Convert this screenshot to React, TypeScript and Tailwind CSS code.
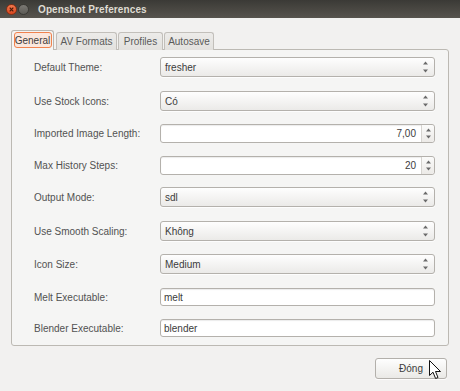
import React from "react";

const Arrows = () => (
  <svg width="7" height="12" viewBox="0 0 7 12" className="shrink-0">
    <path d="M3.5 0.5 L6 3.5 L1 3.5 Z" fill="#6a6a6a" />
    <path d="M3.5 11.5 L6 8.5 L1 8.5 Z" fill="#6a6a6a" />
  </svg>
);

const Combo = ({ value }: { value: string }) => (
  <div className="h-[20px] w-[275px] flex items-center justify-between pl-[4px] pr-[5px] rounded-[3px] border border-[#b4b1ac] bg-gradient-to-b from-[#fefefe] to-[#ebeae8] shadow-[0_1px_0_rgba(255,255,255,0.8)] text-[#3c3c3c]">
    <span>{value}</span>
    <Arrows />
  </div>
);

const Spin = ({ value }: { value: string }) => (
  <div className="h-[19px] w-[275px] flex rounded-[3px] border border-[#b4b1ac] bg-white shadow-[inset_0_1px_1px_rgba(0,0,0,0.08)] text-[#3c3c3c]">
    <div className="flex-1 flex items-center justify-end pr-[5px]">{value}</div>
    <div className="w-[13px] border-l border-[#d6d4d0] bg-gradient-to-b from-[#fbfbfa] to-[#eceae7] rounded-r-[3px] flex items-center justify-center">
      <svg width="7" height="11" viewBox="0 0 7 11">
        <path d="M3.5 0.5 L6 3.5 L1 3.5 Z" fill="#6a6a6a" />
        <path d="M3.5 10.5 L6 7.5 L1 7.5 Z" fill="#6a6a6a" />
      </svg>
    </div>
  </div>
);

const Entry = ({ value }: { value: string }) => (
  <div className="h-[18px] w-[275px] flex items-center pl-[3px] rounded-[3px] border border-[#b4b1ac] bg-white shadow-[inset_0_1px_1px_rgba(0,0,0,0.08)] text-[#3c3c3c]">
    {value}
  </div>
);

const FRow = ({ label, mt, children }: { label: string; mt: string; children: React.ReactNode }) => (
  <div className={`flex items-center ${mt}`}>
    <div className="w-[126px] shrink-0 text-[#525252]">{label}</div>
    {children}
  </div>
);

export default function App() {
  return (
    <div className="relative w-[460px] h-[391px] overflow-hidden bg-[#f2f1f0] font-['Liberation_Sans',Arial,sans-serif] text-[10px]">
      {/* title bar */}
      <div className="h-[18px] flex items-center bg-gradient-to-b from-[#3b3a36] to-[#57544e]">
        <div className="ml-[6px] w-[11px] h-[11px] rounded-full bg-gradient-to-b from-[#f47a4e] to-[#d9451c] border border-[#8a2f13] flex items-center justify-center">
          <svg width="5" height="5" viewBox="0 0 5 5">
            <path d="M0.7 0.7 L4.3 4.3 M4.3 0.7 L0.7 4.3" stroke="#4a1a0a" strokeWidth="1.2" />
          </svg>
        </div>
        <div className="ml-[1px] w-[11px] h-[11px] rounded-full bg-gradient-to-b from-[#7b7974] to-[#5d5b56] border border-[#3a3935]" />
        <div className="ml-[9px] font-bold text-[#dfdbd2] text-[10px] tracking-[0.1px]">Openshot Preferences</div>
      </div>

      <div className="pl-[11px] pt-[12px]">
        {/* tabs */}
        <div className="relative z-10 flex items-end h-[20px] -mb-px">
          <div className="h-[20px] w-[43px] rounded-t-[3px] border border-b-0 border-[#b9b6b0] bg-[#f5f5f4] flex items-start justify-center pt-[1px]">
            <div className="h-[16px] w-[38px] rounded-[3px] border border-[#f0834f] bg-[#fbe7dd] flex items-center justify-center text-[#3c3c3c]">
              General
            </div>
          </div>
          <div className="ml-[2px] h-[18px] w-[61px] rounded-t-[3px] border border-b-0 border-[#c2bfba] bg-gradient-to-b from-[#ecebe9] to-[#e3e1de] flex items-center justify-center text-[#5a5a5a]">
            AV Formats
          </div>
          <div className="ml-[1px] h-[18px] w-[45px] rounded-t-[3px] border border-b-0 border-[#c2bfba] bg-gradient-to-b from-[#ecebe9] to-[#e3e1de] flex items-center justify-center text-[#5a5a5a]">
            Profiles
          </div>
          <div className="ml-[1px] h-[18px] w-[50px] rounded-t-[3px] border border-b-0 border-[#c2bfba] bg-gradient-to-b from-[#ecebe9] to-[#e3e1de] flex items-center justify-center text-[#5a5a5a]">
            Autosave
          </div>
        </div>

        {/* panel */}
        <div className="w-[438px] h-[297px] rounded-[3px] rounded-tl-none border border-[#bcb9b3] bg-[#f5f5f4] pl-[22px] pt-[7px] flex flex-col">
          <FRow label="Default Theme:" mt="mt-0">
            <Combo value="fresher" />
          </FRow>
          <FRow label="Use Stock Icons:" mt="mt-[14px]">
            <Combo value="Có" />
          </FRow>
          <FRow label="Imported Image Length:" mt="mt-[13px]">
            <Spin value="7,00" />
          </FRow>
          <FRow label="Max History Steps:" mt="mt-[13px]">
            <Spin value="20" />
          </FRow>
          <FRow label="Output Mode:" mt="mt-[12px]">
            <Combo value="sdl" />
          </FRow>
          <FRow label="Use Smooth Scaling:" mt="mt-[14px]">
            <Combo value="Không" />
          </FRow>
          <FRow label="Icon Size:" mt="mt-[13px]">
            <Combo value="Medium" />
          </FRow>
          <FRow label="Melt Executable:" mt="mt-[14px]">
            <Entry value="melt" />
          </FRow>
          <FRow label="Blender Executable:" mt="mt-[13px]">
            <Entry value="blender" />
          </FRow>
        </div>
      </div>

      {/* button row */}
      <div className="flex justify-end pr-[13px] mt-[12px]">
        <div className="h-[21px] w-[72px] rounded-[3px] border border-[#b3b0ab] bg-gradient-to-b from-[#fefefe] to-[#eae9e6] shadow-[0_1px_0_rgba(255,255,255,0.8)] flex items-center justify-center text-[#3c3c3c]">
          Đóng
        </div>
      </div>

      {/* mouse cursor */}
      <svg className="absolute left-[429px] top-[360px]" width="13" height="20" viewBox="0 0 13 20">
        <path
          d="M0.5 0.5 L0.5 15.5 L4 12.2 L6.6 18.5 L9 17.5 L6.5 11.5 L11.5 11.5 Z"
          fill="#ffffff"
          stroke="#111111"
          strokeWidth="1"
          strokeLinejoin="round"
        />
      </svg>
    </div>
  );
}
